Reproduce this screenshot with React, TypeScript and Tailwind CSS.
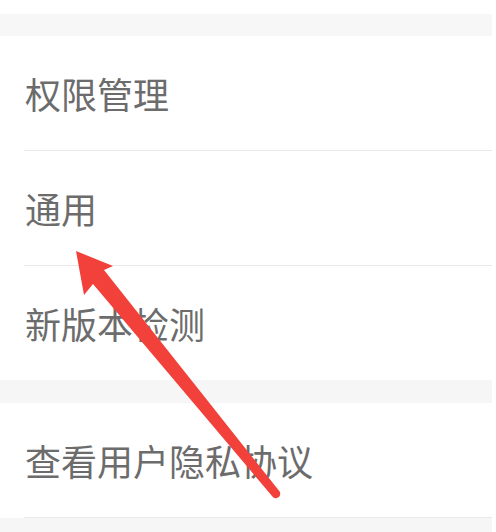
import React from "react";

const font = { fontFamily: '"Noto Sans CJK SC", "Noto Sans", sans-serif' };

interface RowProps {
  label: string;
  divider?: boolean;
}

const Row = ({ label, divider = true }: RowProps) => (
  <div className="pl-6 bg-white">
    <div
      className={
        "flex items-center text-[36px] leading-none text-[#6c6c6c] " +
        (divider ? "border-b border-[#e9e9e9] h-[115px]" : "h-[114px]")
      }
    >
      <span className="pl-[1px]">{label}</span>
    </div>
  </div>
);

// red annotation arrow drawn over the list
const Arrow = () => (
  <svg
    className="absolute left-0 top-0 pointer-events-none"
    width="496"
    height="532"
    viewBox="0 0 496 532"
  >
    <path
      d="M76 251 L113 266 L104 270 L280 492 Q281 497 277 498 Q274 499 272 496 L93 284 L84 295 Z"
      fill="#f2403a"
      strokeLinejoin="round"
    />
  </svg>
);

export default function App() {
  return (
    <div className="relative w-[496px] h-[532px] bg-white overflow-hidden" style={font}>
      <div className="w-[492px] h-full flex flex-col">
        <div className="h-[14px] bg-white" />
        <div className="h-[22px] bg-[#f7f7f7]" />
        <Row label="权限管理" />
        <Row label="通用" />
        <Row label="新版本检测" divider={false} />
        <div className="h-[23px] bg-[#f6f6f6]" />
        <Row label="查看用户隐私协议" />
        <div className="flex-1 bg-[#f6f6f6]" />
      </div>
      <Arrow />
    </div>
  );
}
